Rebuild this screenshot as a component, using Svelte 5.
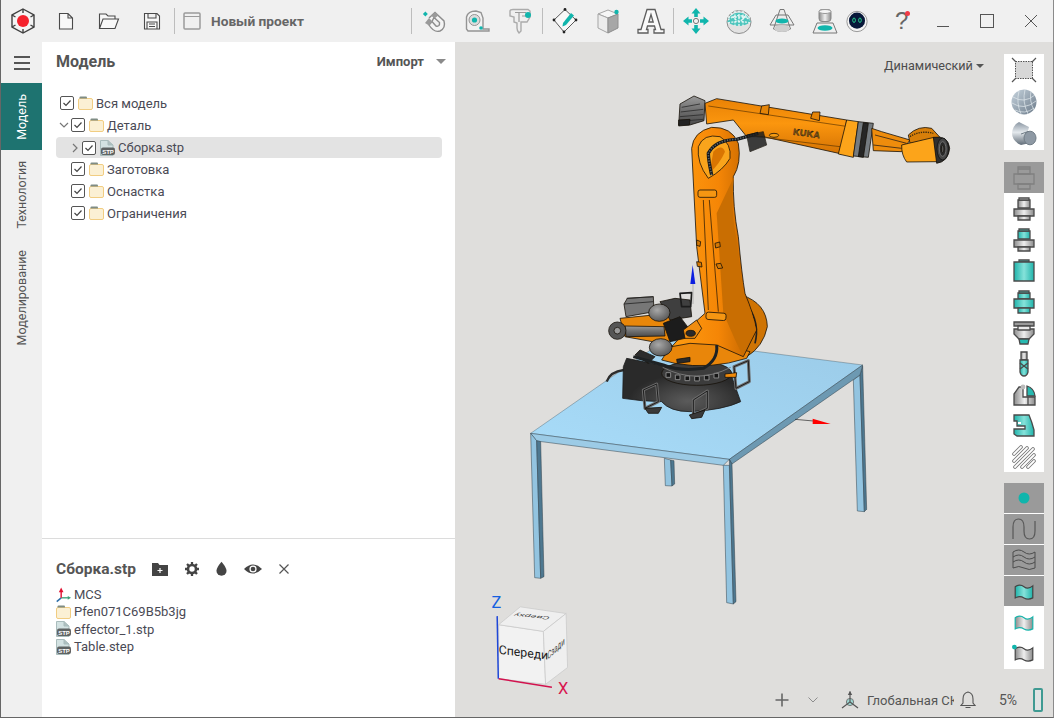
<script>
	const tree = [
		{ label: 'Вся модель', level: 0, icon: 'folder' },
		{ label: 'Деталь', level: 1, icon: 'folder', caret: 'down' },
		{ label: 'Сборка.stp', level: 2, icon: 'stp', caret: 'right', selected: true },
		{ label: 'Заготовка', level: 1, icon: 'folder' },
		{ label: 'Оснастка', level: 1, icon: 'folder' },
		{ label: 'Ограничения', level: 1, icon: 'folder' }
	];
	const items = [
		{ label: 'MCS', icon: 'axes' },
		{ label: 'Pfen071C69B5b3jg', icon: 'folder' },
		{ label: 'effector_1.stp', icon: 'stp' },
		{ label: 'Table.step', icon: 'stp' }
	];
	const hatch = ['M2 9 L9 2', 'M2 16 L15 3', 'M3 22 L21 4', 'M10 22 L22 10', 'M16 22 L22 16'];
	const ringSlots = [228, 256, 285, 314, 343, 372];
</script>

{#snippet folder()}
	<svg class="node-icon" viewBox="0 0 15 14" width="15" height="14">
		<rect x="0.5" y="2.5" width="14" height="11" rx="1.5" fill="#fbf0d4" stroke="#f1cd82" />
		<path d="M1.5 2.5 V1.5 Q1.5 .5 2.5 .5 H8 Q9 .5 9 1.5 V2.5 Z" fill="#7f8c84" />
	</svg>
{/snippet}

{#snippet stp()}
	<svg class="node-icon" viewBox="0 0 15 16" width="15" height="16">
		<path d="M.5 .5 H8 L13 5 V15.5 H.5 Z" fill="#d3e2e2" stroke="#a9bcbc" />
		<path d="M8 .5 V5 H13" fill="#aebfbf" stroke="#a9bcbc" />
		<rect x="1" y="7.5" width="14" height="7.5" rx="2" fill="#5f6363" />
		<text x="8" y="13.6" class="stp-label">STP</text>
	</svg>
{/snippet}

{#snippet axes()}
	<svg class="node-icon" viewBox="0 0 16 16" width="15" height="16">
		<path d="M5.5 11 L.8 15" stroke="#2d6fa8" stroke-width="1.6" />
		<path d="M5.5 11 H13" stroke="#3aa17a" stroke-width="1.4" />
		<path d="M16 11 L12.5 9 V13 Z" fill="#3aa17a" />
		<path d="M5.5 11 V3" stroke="#e01030" stroke-width="1.5" />
		<path d="M5.5 0 L3 5 H8 Z" fill="#e01030" />
	</svg>
{/snippet}

{#snippet flag(fill, stroke)}
	<path d="M4 7 Q10 3 15 7 T26 6 V21 Q20 24 15 21 T4 21 Z" {fill} {stroke} stroke-width="1.5" />
{/snippet}

<div class="app">
	<svg class="defs" width="0" height="0" aria-hidden="true">
		<defs>
			<linearGradient id="steel">
				<stop offset="0" stop-color="#8b8b8b" />
				<stop offset=".5" stop-color="#efefef" />
				<stop offset="1" stop-color="#8b8b8b" />
			</linearGradient>
			<linearGradient id="aqua">
				<stop offset="0" stop-color="#1fb3aa" />
				<stop offset=".5" stop-color="#86e2da" />
				<stop offset="1" stop-color="#1fb3aa" />
			</linearGradient>
			<linearGradient id="ball" x1="0" y1="0" x2="1" y2="1">
				<stop offset="0" stop-color="#c6d3dd" />
				<stop offset="1" stop-color="#6b7a89" />
			</linearGradient>
			<linearGradient id="billet" x1="0" y1="0" x2="0" y2="1">
				<stop offset="0" stop-color="#8a96a2" />
				<stop offset=".45" stop-color="#e4e9ed" />
				<stop offset="1" stop-color="#5f6b77" />
			</linearGradient>
			<linearGradient id="orange" x1="0" y1="0" x2="1" y2="0">
				<stop offset="0" stop-color="#ff9d12" />
				<stop offset=".55" stop-color="#f58606" />
				<stop offset="1" stop-color="#b96000" />
			</linearGradient>
			<linearGradient id="forearm" x1="0" y1="0" x2="0" y2="1">
				<stop offset="0" stop-color="#e98205" />
				<stop offset=".45" stop-color="#fb960e" />
				<stop offset="1" stop-color="#d47203" />
			</linearGradient>
			<linearGradient id="gray3d" x1="0" y1="0" x2="0" y2="1">
				<stop offset="0" stop-color="#9a9a9a" />
				<stop offset=".5" stop-color="#6f6f6f" />
				<stop offset="1" stop-color="#4a4a4a" />
			</linearGradient>
			<radialGradient id="bottle" cx=".4" cy=".35" r=".7">
				<stop offset="0" stop-color="#a8a8a8" />
				<stop offset="1" stop-color="#555" />
			</radialGradient>
			<radialGradient id="plinth" cx=".55" cy=".8" r=".5">
				<stop offset="0" stop-color="#5b5b5b" />
				<stop offset="1" stop-color="#2a2a2a" />
			</radialGradient>
			<linearGradient id="tabletop" x1="0" y1="1" x2="1" y2="0">
				<stop offset="0" stop-color="#a8dcf9" />
				<stop offset="1" stop-color="#9bcbe8" />
			</linearGradient>
		</defs>
	</svg>

	<header class="toolbar">
		<div class="logo">
			<svg viewBox="0 0 24 26" width="24" height="26">
				<path d="M12 1 L23 7 V19 L12 25 L1 19 V7 Z" fill="#f4f4f4" stroke="#3f3f3f" stroke-width="1.4" />
				<path d="M12 1 V5 M23 7 L19.5 9 M23 19 L19.5 17 M12 25 V21 M1 19 L4.5 17 M1 7 L4.5 9" stroke="#3f3f3f" stroke-width="1.4" />
				<circle cx="12" cy="13" r="6" fill="#f5222d" />
			</svg>
		</div>
		<button class="tool" aria-label="Новый">
			<svg viewBox="0 0 20 20" width="20" height="20" class="line">
				<path d="M3.5 2.5 H12 L16.5 7 V18 H3.5 Z M12 2.5 V7 H16.5" />
			</svg>
		</button>
		<button class="tool" aria-label="Открыть">
			<svg viewBox="0 0 22 20" width="22" height="20" class="line">
				<path d="M1.5 17.5 V3 H8 L10 5 H17 V8 M1.5 17.5 L5 8 H20.5 L17 17.5 Z" />
			</svg>
		</button>
		<button class="tool" aria-label="Сохранить">
			<svg viewBox="0 0 20 20" width="20" height="20" class="line">
				<path d="M2.5 2.5 H15 L17.5 5 V18 H2.5 Z M6 2.5 V7 H14 V2.5 M5 18 V11 H15 V18 M7 13 H13 M7 15.5 H13" />
			</svg>
		</button>
		<span class="sep"></span>
		<div class="project">
			<svg viewBox="0 0 18 18" width="18" height="18">
				<rect x="1" y="1" width="16" height="16" rx="1" fill="#f0f0f0" stroke="#9b9b9b" stroke-width="1.5" />
				<path d="M1 4.5 H17" stroke="#9b9b9b" />
			</svg>
			<span>Новый проект</span>
		</div>
		<span class="sep"></span>
		<button class="tool" aria-label="Магнит">
			<svg viewBox="0 0 26 26" width="26" height="26">
				<path d="M8 10 L14 4.5 L23 13 Q25 20 19 23 Q13 25 8 17 L11 13.5 L15 18 Q19 19 18.5 14.5 L13 9.5 L11 13.5" fill="#f4f4f4" stroke="#8c8c8c" stroke-width="1.4" />
				<path d="M4 15 L8 10 L11.5 13.5 L8 17.5 Z" fill="#9a9a9a" />
				<path d="M10 7.5 L14 4 L17.5 7.2 L13.5 10.6 Z" fill="#9a9a9a" />
				<rect x="2.5" y="4" width="3.5" height="3.5" transform="rotate(45 4 6)" fill="#11b5ac" />
			</svg>
		</button>
		<button class="tool" aria-label="Рулетка">
			<svg viewBox="0 0 26 26" width="26" height="26">
				<path d="M2.5 21 V9 Q4 3 12 3 L17 4.5 L19 10 V21 H25 V23 H4 Z" fill="#f2f2f2" stroke="#949494" stroke-width="1.4" />
				<circle cx="10.5" cy="12" r="5.5" fill="#dcdcdc" stroke="#949494" />
				<circle cx="10.5" cy="12" r="2.6" fill="#11b5ac" />
				<circle cx="17" cy="20" r="1.8" fill="#11b5ac" />
			</svg>
		</button>
		<button class="tool" aria-label="Штангенциркуль">
			<svg viewBox="0 0 26 26" width="26" height="26">
				<path d="M3 3 Q3 1.5 6 1.5 H21 L23 3 V9 L20 14 H14 V23 L12 25 Q10 23 10 20 V15 L7 14 V9 L3 8 Z" fill="#efefef" stroke="#ababab" stroke-width="1.4" />
				<path d="M8 4.5 H19 M12 5 V14 M15 8 H19" stroke="#9a9a9a" stroke-width="1.2" />
				<circle cx="21" cy="7" r="3" fill="#11b5ac" />
			</svg>
		</button>
		<span class="sep"></span>
		<button class="tool" aria-label="Эскиз">
			<svg viewBox="0 0 26 26" width="26" height="26">
				<path d="M2 12 L13 1.5 L24 12 L12 24 Z" fill="#f8f8f8" stroke="#5a5a5a" stroke-width="1" />
				<circle cx="2" cy="12" r="1.4" fill="#222" /><circle cx="13" cy="1.5" r="1.4" fill="#222" />
				<circle cx="24" cy="12" r="1.4" fill="#222" /><circle cx="12" cy="24" r="1.4" fill="#222" />
				<path d="M11 15 L19 5 L22 7.5 L14 17 L10.5 18.5 Z" fill="#11b5ac" />
			</svg>
		</button>
		<button class="tool" aria-label="Тело">
			<svg viewBox="0 0 26 26" width="26" height="26">
				<path d="M3 6 L13 2 L23 6 L13 10 Z" fill="#f6f6f6" stroke="#a5a5a5" />
				<path d="M3 6 L13 10 V25 L3 20 Z" fill="#ececec" stroke="#a5a5a5" />
				<path d="M13 10 L23 6 V20 L13 25 Z" fill="#a7a7a7" stroke="#8e8e8e" />
				<circle cx="21.5" cy="4" r="2.2" fill="#11b5ac" />
			</svg>
		</button>
		<button class="tool" aria-label="Текст">
			<svg viewBox="0 0 28 26" width="28" height="26">
				<path d="M10 1.5 H18 L24 21.5 H27 V25 H17 V21.5 H18.5 L17.5 18 H10.5 L9.5 21.5 H11 V25 H1 V21.5 H4 Z M11.8 14 H16.2 L14 6.5 Z" fill="#fafafa" stroke="#5e5e5e" stroke-width="1.3" />
			</svg>
		</button>
		<span class="sep"></span>
		<button class="tool" aria-label="Перемещение">
			<svg viewBox="0 0 26 26" width="26" height="26">
				<circle cx="13" cy="13" r="2.6" fill="#f2f2f2" stroke="#777" />
				<path d="M13 0 L17.5 5.5 H14.8 V9 H11.2 V5.5 H8.5 Z M13 26 L17.5 20.5 H14.8 V17 H11.2 V20.5 H8.5 Z M0 13 L5.5 8.5 V11.2 H9 V14.8 H5.5 V17.5 Z M26 13 L20.5 8.5 V11.2 H17 V14.8 H20.5 V17.5 Z" fill="#11b5ac" />
			</svg>
		</button>
		<button class="tool" aria-label="Сфера">
			<svg viewBox="0 0 26 26" width="26" height="26">
				<ellipse cx="13" cy="14" rx="12" ry="11.5" fill="#e2e2e2" stroke="#8e8e8e" />
				<path d="M1.2 14 A12 11.5 0 0 1 24.8 14 Q13 22 1.2 14 Z" fill="#4cc5bd" />
				<path d="M5 5 Q13 21 21 5 M2 12 Q13 3 24 12 M9 3 V18 M13 2.5 V19 M17 3 V18 M2 9 H24 M2 15 Q13 12 24 15" stroke="#e7f6f5" stroke-width="1.4" stroke-dasharray="2 1.4" fill="none" />
			</svg>
		</button>
		<button class="tool" aria-label="Конус">
			<svg viewBox="0 0 26 26" width="26" height="26">
				<path d="M11 1.5 H15 L21.5 21 Q13 26 4.5 21 Z" fill="#ececec" stroke="#777" />
				<path d="M7 7 H19 L25 17 H1 Z" fill="none" stroke="#777" />
				<ellipse cx="13" cy="13" rx="6.5" ry="2.6" fill="#11b5ac" />
				<ellipse cx="13" cy="20.5" rx="8" ry="3.5" fill="#cfcfcf" />
			</svg>
		</button>
		<button class="tool" aria-label="Плоскость">
			<svg viewBox="0 0 26 26" width="26" height="26">
				<rect x="7" y="1.5" width="12" height="12" rx="3" fill="url(#steel)" stroke="#888" />
				<ellipse cx="13" cy="3.5" rx="6" ry="2" fill="#f5f5f5" stroke="#999" />
				<path d="M5 15 H21 L25 25 H1 Z" fill="#efefef" stroke="#777" />
				<ellipse cx="13" cy="20" rx="7.5" ry="2.8" fill="#11b5ac" />
			</svg>
		</button>
		<button class="tool narrow" aria-label="Ассистент">
			<svg viewBox="0 0 26 26" width="23" height="23">
				<circle cx="13" cy="13" r="12" fill="#f4f4f4" stroke="#8a8a8a" />
				<circle cx="13" cy="12" r="9.5" fill="#08183a" />
				<ellipse cx="9.5" cy="11.5" rx="1.6" ry="2.6" fill="none" stroke="#2ee89b" />
				<ellipse cx="16.5" cy="11.5" rx="1.6" ry="2.6" fill="none" stroke="#2ee89b" />
			</svg>
		</button>
		<button class="tool help" aria-label="Справка">
			<span class="mark">?</span>
			<span class="dot"></span>
		</button>
		<div class="window">
			<button aria-label="Свернуть">
				<svg viewBox="0 0 14 14" width="14" height="14"><path d="M1 12.5 H13" stroke="#555" /></svg>
			</button>
			<button aria-label="Развернуть">
				<svg viewBox="0 0 14 14" width="14" height="14"><rect x=".5" y=".5" width="13" height="13" fill="none" stroke="#555" /></svg>
			</button>
			<button aria-label="Закрыть">
				<svg viewBox="0 0 14 14" width="14" height="14"><path d="M1 1 L13 13 M13 1 L1 13" stroke="#555" /></svg>
			</button>
		</div>
	</header>

	<div class="body">
		<nav class="rail">
			<button class="burger" aria-label="Меню"><span></span><span></span><span></span></button>
			<button class="tab active" style="height:67px"><span>Модель</span></button>
			<button class="tab" style="height:90px"><span>Технология</span></button>
			<button class="tab" style="height:115px"><span>Моделирование</span></button>
		</nav>

		<aside class="panel">
			<div class="panel-head">
				<h2>Модель</h2>
				<div class="import">Импорт <i class="caret"></i></div>
			</div>
			<ul class="tree">
				{#each tree as node}
					<li class="node level-{node.level}" class:selected={node.selected}>
						{#if node.level > 0}
							<span class="twist">
								{#if node.caret === 'down'}
									<svg viewBox="0 0 10 10" width="10" height="10"><path d="M1 3 L5 7 L9 3" /></svg>
								{:else if node.caret === 'right'}
									<svg viewBox="0 0 10 10" width="10" height="10"><path d="M3 1 L7 5 L3 9" /></svg>
								{/if}
							</span>
						{/if}
						<span class="check">
							<svg viewBox="0 0 12 12" width="12" height="12"><path d="M2.5 6 L5 8.5 L9.5 3.5" /></svg>
						</span>
						{#if node.icon === 'stp'}{@render stp()}{:else}{@render folder()}{/if}
						<span class="label">{node.label}</span>
					</li>
				{/each}
			</ul>

			<section class="props">
				<div class="props-head">
					<h3>Сборка.stp</h3>
					<div class="props-actions">
						<svg viewBox="0 0 16 14" width="16" height="14">
							<path d="M0 1 H6 L7.5 3 H16 V14 H0 Z" fill="#444" />
							<path d="M8 6 V11 M5.5 8.5 H10.5" stroke="#fff" stroke-width="1.2" />
						</svg>
						<svg viewBox="0 0 16 16" width="14" height="14" class="gear">
							<circle cx="8" cy="8" r="4.6" fill="none" stroke="#444" stroke-width="3" />
							<path d="M8 0 V16 M0 8 H16 M2.3 2.3 L13.7 13.7 M13.7 2.3 L2.3 13.7" stroke="#444" stroke-width="2.6" stroke-dasharray="3 10 3 0" />
						</svg>
						<svg viewBox="0 0 12 16" width="11" height="15">
							<path d="M6 .5 Q11.5 7 11.5 10.5 A5.5 5.5 0 0 1 .5 10.5 Q.5 7 6 .5 Z" fill="#444" />
						</svg>
						<svg viewBox="0 0 18 12" width="18" height="12">
							<path d="M0 6 Q9 -3 18 6 Q9 15 0 6 Z" fill="#444" />
							<circle cx="9" cy="6" r="3.6" fill="#fff" />
							<circle cx="9" cy="6" r="2.3" fill="#444" />
						</svg>
						<svg viewBox="0 0 10 10" width="10" height="10">
							<path d="M.5 .5 L9.5 9.5 M9.5 .5 L.5 9.5" stroke="#555" stroke-width="1.2" />
						</svg>
					</div>
				</div>
				<ul class="items">
					{#each items as item}
						<li>
							{#if item.icon === 'stp'}{@render stp()}{:else if item.icon === 'axes'}{@render axes()}{:else}{@render folder()}{/if}
							<span>{item.label}</span>
						</li>
					{/each}
				</ul>
			</section>
		</aside>

		<main class="viewport">
			<svg class="scene" viewBox="455 42 598 675">
				<!-- table -->
				<g transform="translate(520 350) scale(.33333)" stroke="#2f3f49" stroke-width="1.5" stroke-linejoin="round">
					<path d="M433 325 L436 407 L456 408 L452 330 Z" fill="#93c4e0" />
					<path d="M452 330 L456 408 L464 402 L462 332 Z" fill="#4e7890" />
					<path d="M1000 90 L1012 483 L1033 485 L1020 75 Z" fill="#93c4e0" />
					<path d="M1020 75 L1033 485 L1040 478 L1028 48 Z" fill="#4e7890" />
					<path d="M436 -31 L1028 45 L628 328 L32 250 Z" fill="url(#tabletop)" stroke-width="1" />
					<path d="M628 328 L1028 45 L1020 75 L636 342 Z" fill="#6d99b2" />
					<path d="M32 250 L628 328 L610 346 L50 273 Z" fill="#9ccbe6" />
					<path d="M32 250 L44 683 L62 685 L50 272 Z" fill="#93c4e0" />
					<path d="M50 272 L62 685 L72 680 L62 275 Z" fill="#4e7890" />
					<path d="M610 346 L620 758 L640 762 L628 346 Z" fill="#93c4e0" />
					<path d="M628 328 L640 762 L648 755 L636 342 Z" fill="#4e7890" />
				</g>

				<!-- robot -->
				<g transform="translate(590 80) scale(.33333)" stroke="#17110a" stroke-width="2.4" stroke-linejoin="round">
					<!-- plinth and rotary base -->
					<path d="M50 905 Q60 875 102 870" fill="none" stroke="#2d2d2d" stroke-width="7" />
					<path d="M100 860 L110 835 L210 855 L420 875 L452 965 Q400 990 300 995 Q240 995 215 965 L155 962 L98 955 Z" fill="url(#plinth)" stroke="#1c1c1c" />
					<ellipse cx="320" cy="880" rx="105" ry="36" fill="#3c3c3c" />
					<path d="M218 862 Q320 915 422 862" fill="none" stroke="#777" stroke-width="3" />
					<g fill="#161616" stroke="#8a8a8a" stroke-width="3">
						{#each ringSlots as x, i}
							<rect {x} y={878 + [0, 7, 10, 11, 8, 2][i]} width="14" height="14" />
						{/each}
					</g>
					<g fill="none" stroke="#6b6b6b" stroke-width="9">
						<path d="M160 930 L200 912 L205 965 L165 985 Z" />
						<path d="M310 960 L352 933 L352 985 L310 1005 Z" />
						<path d="M432 860 L475 842 L478 905 L438 925 Z" />
					</g>
					<g fill="none" stroke="#1e1e1e" stroke-width="3">
						<path d="M160 930 L200 912 L205 965 L165 985 Z" />
						<path d="M310 960 L352 933 L352 985 L310 1005 Z" />
						<path d="M432 860 L475 842 L478 905 L438 925 Z" />
					</g>
					<path d="M165 985 L215 982 L205 1000 L175 1000 Z M298 1005 L345 990 L335 1012 L305 1016 Z" fill="#3a3a3a" />
					<path d="M405 882 L440 878 L438 892 L405 892 Z" fill="#f08a0a" />

					<!-- forearm and wrist -->
					<path d="M270 72 L312 48 L345 62 L342 122 L300 135 L266 135 Z" fill="url(#gray3d)" />
					<path d="M275 82 L330 72 M272 96 L340 88 M270 110 L340 104 M268 124 L340 118" stroke="#2a2a2a" fill="none" />
					<path d="M266 120 L300 118 L298 135 L266 138 Z" fill="#222" />
					<path d="M345 70 L380 56 L770 120 L755 222 L520 170 L470 170 L430 120 L350 132 Z" fill="url(#forearm)" />
					<path d="M355 78 L775 140 M500 170 L750 200" stroke="#5a3302" stroke-width="2" fill="none" />
					<path d="M510 100 L515 78 L538 74 L535 104 Z M662 115 L668 96 L690 96 L688 122 Z" fill="#e48407" />
					<path d="M770 120 L805 125 L790 232 L745 222 Z" fill="#fca41a" />
					<path d="M805 125 L850 130 L835 232 L790 228 Z" fill="#757b80" />
					<path d="M820 128 L835 130 L820 232 L805 230 Z" fill="#262626" />
					<path d="M845 145 L875 155 L960 180 L935 215 L850 212 Z" fill="#ee8c0c" />
					<path d="M855 165 L950 190 M850 195 L935 205" stroke="#2b2118" fill="none" />
					<path d="M955 165 Q985 135 1025 145 L1050 172 L960 190 Z" fill="#d77f0a" />
					<path d="M960 170 Q990 150 1030 160" fill="none" stroke="#3a2a10" stroke-width="4" stroke-dasharray="4 3" />
					<path d="M935 195 L1032 172 L1042 245 L950 246 Q934 225 935 195 Z" fill="#fca41a" />
					<path d="M1030 172 Q1075 165 1079 205 Q1075 245 1040 250 Z" fill="#2f2f2f" />
					<ellipse cx="1058" cy="207" rx="17" ry="33" fill="#454545" stroke="#111" />
					<ellipse cx="1058" cy="207" rx="10" ry="22" fill="#2a2a2a" stroke="#7a7a7a" />
					<ellipse cx="1058" cy="207" rx="4" ry="11" fill="#555" />
					<text class="kuka" transform="translate(608 164) rotate(8)">KUKA</text>
					<ellipse cx="552" cy="166" rx="14" ry="6" fill="#f59a12" />

					<!-- rear swing housing -->
					<path d="M455 645 Q530 670 532 740 Q520 800 470 830 L440 780 Z" fill="#cf7404" />
					<path d="M475 680 Q510 730 495 790" fill="none" stroke="#222" stroke-width="5" />
					<path d="M240 800 Q300 775 400 795 L480 815 L470 835 Q360 870 255 850 L215 840 Z" fill="#e9860a" />

					<!-- main arm -->
					<path d="M305 205 Q310 155 365 142 Q425 140 445 190 Q455 250 430 290 Q428 380 445 470 Q455 580 465 640 Q490 700 500 750 L460 830 L380 795 L300 790 L245 800 L300 740 L345 700 L320 500 Z" fill="url(#orange)" />
					<path d="M432 290 Q420 380 440 480 L460 640 Q490 700 498 750 L458 826 L440 790 L400 700 L380 400 Z" fill="#c96e02" stroke="none" />
					<path d="M355 295 Q320 250 325 200 Q340 160 390 170 Q425 190 420 235 Q400 270 355 295 Z" fill="#f9a41c" />
					<path d="M358 280 Q390 250 405 215 Q395 190 370 215 Z" fill="#d97502" stroke="none" />
					<path d="M365 285 Q355 240 355 220 Q375 180 440 178 L505 160" fill="none" stroke="#14171a" stroke-width="10" />
					<path d="M365 285 Q355 240 355 220 Q375 180 440 178 L505 160" fill="none" stroke="#5c6468" stroke-width="5" stroke-dasharray="4 4" />
					<path d="M470 165 L520 155 L530 195 L480 215 Z" fill="#1f1f1f" opacity=".85" />
					<rect x="324" y="330" width="56" height="22" rx="6" fill="#f59612" />
					<path d="M340 360 L355 690 M358 360 L385 695" fill="none" stroke="#3a2205" stroke-width="2.4" />
					<rect x="348" y="698" width="60" height="22" rx="7" fill="#f59612" transform="rotate(4 378 709)" />
					<path d="M320 480 l12 5 l-2 14 l-10 -3 Z M375 490 l14 -4 l2 14 l-14 4 Z M320 545 l14 2 l2 14 l-14 -2 Z M378 552 l14 -2 l6 14 l-14 2 Z" fill="#d37805" />

					<!-- tool side: motors and bottles -->
					<path d="M90 715 L240 700 L250 780 L215 790 L105 770 Z" fill="#e9870a" />
					<path d="M102 672 L112 655 L190 650 L192 695 L108 710 Z" fill="#777" />
					<path d="M102 672 L190 665 M190 650 L110 655" fill="none" stroke="#222" />
					<path d="M210 665 L255 655 L300 660 L305 710 L240 720 Z" fill="#3f3f3f" />
					<path d="M270 640 L305 638 L302 680 L275 680 Z" fill="none" stroke="#1c1c1c" stroke-width="5" />
					<ellipse cx="208" cy="698" rx="32" ry="26" fill="url(#bottle)" />
					<path d="M220 730 L270 710 L300 750 L285 775 L240 785 Z" fill="#1c1c1c" />
					<path d="M105 738 L222 740 L225 768 L108 770 Z" fill="url(#gray3d)" />
					<circle cx="82" cy="752" r="26" fill="#555" />
					<circle cx="82" cy="752" r="10" fill="#9a9a9a" />
					<ellipse cx="212" cy="802" rx="34" ry="26" fill="url(#bottle)" />
					<path d="M280 750 L320 720 L335 745 L315 775 L285 775 Z" fill="#f08d10" />
					<ellipse cx="302" cy="760" rx="14" ry="9" fill="#2a2a2a" />
					<path d="M150 810 L195 830 L175 850 L135 825 Z" fill="#2c2c2c" />
					<path d="M380 795 Q385 840 340 865 Q270 875 220 855 L130 830" fill="none" stroke="#1e2224" stroke-width="9" />
					<path d="M260 838 L300 832 L300 845 L262 850 Z" fill="#2a2a2a" />

					<!-- axes -->
					<path d="M309 612 V672" stroke="#9a9a9a" stroke-width="2" />
					<path d="M308 555 L301 612 H316 Z" fill="#0c1ee0" stroke="none" />
					<path d="M615 1018 L670 1023" stroke="#222" stroke-width="2" />
					<path d="M668 1016 L722 1032 L668 1032 Z" fill="#f00" stroke="none" />
				</g>

				<!-- view cube -->
				<g transform="translate(470 580) scale(.3724)">
					<path d="M77 120 L197 138 L203 280 L77 265 Z" fill="#f2f2f2" stroke="#c9c9c9" stroke-width="2" />
					<path d="M77 120 L135 72 L258 90 L197 138 Z" fill="#efefef" stroke="#c9c9c9" stroke-width="2" />
					<path d="M197 138 L258 90 L262 235 L203 280 Z" fill="#efefef" stroke="#c9c9c9" stroke-width="2" />
					<text class="cube" transform="matrix(1 .12 0 1 77 198)">Спереди</text>
					<text class="cube small" transform="matrix(.55 -.5 0 1 208 214)">Сзади</text>
					<text class="cube small" transform="matrix(-1 -.1 .3 -.38 216 99)">Сверху</text>
					<path d="M73 97 L76 265" stroke="#1f47d8" stroke-width="4" />
					<path d="M77 265 L220 288" stroke="#d2124e" stroke-width="4" />
					<text x="58" y="74" class="axis z">Z</text>
					<text x="236" y="306" class="axis x">X</text>
				</g>
			</svg>

			<button class="mode">Динамический <i class="caret small"></i></button>

			<div class="palette">
				<div class="group">
					<button class="cell tall" aria-label="Рамка">
						<svg viewBox="0 0 26 26" width="26" height="26">
							<rect x="4.5" y="4.5" width="17" height="17" fill="#d7d7d7" stroke="#555" stroke-dasharray="1.5 1" />
							<path d="M1 1 L5 5 M25 1 L21 5 M1 25 L5 21 M25 25 L21 21" stroke="#555" stroke-width="1.2" />
						</svg>
					</button>
					<button class="cell tall" aria-label="Сетка">
						<svg viewBox="0 0 26 26" width="26" height="26">
							<circle cx="13" cy="13" r="12.5" fill="url(#ball)" />
							<path d="M2 8 Q13 15 24 6 M1 14 Q13 22 25 12 M4 21 Q14 26 23 19 M8 2 Q5 14 10 25 M14 .5 Q11 13 17 25 M20 2 Q18 12 23 21" fill="none" stroke="#e2e9ee" stroke-width=".7" />
						</svg>
					</button>
					<button class="cell tall" aria-label="Деталь">
						<svg viewBox="0 0 26 26" width="26" height="26">
							<path d="M1 12 Q2 4 8 1 L18 6 Q15 15 19 22 L10 24 Q1 20 1 12 Z" fill="url(#billet)" />
							<ellipse cx="19" cy="17" rx="6" ry="6.8" fill="#8e99a4" stroke="#6f7b85" />
							<path d="M10 13 L17 10.5" stroke="#6f7b85" />
						</svg>
					</button>
				</div>

				<div class="group">
					<button class="cell dim" aria-label="Заготовка">
						<svg viewBox="0 0 22 24" width="22" height="24" class="ghost">
							<path d="M5 1 H17 V8 H5 Z M5 3 H17" /><path d="M1 8 H21 V18 H1 Z" /><path d="M5 18 H17 V23 H5 Z" />
						</svg>
					</button>
					<button class="cell" aria-label="Патрон">
						<svg viewBox="0 0 22 24" width="22" height="24" class="part">
							<path d="M5 3 H17 V11 H5 Z" fill="url(#steel)" /><path d="M6 1 H16 V3 H6 Z" fill="#eee" />
							<path d="M1 12 H21 V19 H1 Z" fill="url(#steel)" /><path d="M5 19 H17 V23 H5 Z" fill="url(#steel)" />
						</svg>
					</button>
					<button class="cell" aria-label="Патрон">
						<svg viewBox="0 0 22 24" width="22" height="24" class="part">
							<path d="M5 3 H17 V11 H5 Z" fill="url(#aqua)" /><path d="M6 1 H16 V3 H6 Z" fill="#54cfc7" />
							<path d="M1 12 H21 V19 H1 Z" fill="url(#steel)" /><path d="M5 19 H17 V23 H5 Z" fill="url(#steel)" />
						</svg>
					</button>
					<button class="cell" aria-label="Цилиндр">
						<svg viewBox="0 0 22 24" width="22" height="24" class="part">
							<path d="M6 1 H16 V3 H6 Z" fill="#54cfc7" /><path d="M1 3 H21 V22 H1 Z" fill="url(#aqua)" />
						</svg>
					</button>
					<button class="cell" aria-label="Втулка">
						<svg viewBox="0 0 22 24" width="22" height="24" class="part">
							<path d="M5 3 H17 V9 H5 Z" fill="url(#aqua)" /><path d="M6 1 H16 V3 H6 Z" fill="#54cfc7" />
							<path d="M1 9 H21 V18 H1 Z" fill="url(#aqua)" /><path d="M5 18 H17 V23 H5 Z" fill="url(#aqua)" />
						</svg>
					</button>
					<button class="cell" aria-label="Держатель">
						<svg viewBox="0 0 22 24" width="22" height="24" class="part">
							<path d="M1 1 H21 V5 H1 Z" fill="#9a9a9a" /><path d="M1 8 H21 V13 L16 18 H6 L1 13 Z" fill="url(#steel)" />
							<path d="M5 5 H17 V9 H5 Z" fill="#e8e8e8" /><path d="M6 18 H16 L15 23 H7 Z" fill="#27b9b0" />
						</svg>
					</button>
					<button class="cell" aria-label="Фреза">
						<svg viewBox="0 0 12 26" width="12" height="26" class="part">
							<path d="M3 1 H9 V9 H3 Z" fill="url(#steel)" />
							<path d="M2 9 H10 V21 Q9 25 6 25 Q3 25 2 21 Z" fill="url(#aqua)" />
							<path d="M2 12 L10 18 M2 18 L10 12" stroke-width="1" fill="none" />
						</svg>
					</button>
					<button class="cell" aria-label="Станок">
						<svg viewBox="0 0 24 22" width="24" height="22" class="part">
							<path d="M2 21 V10 L7 3 H11 V13 H16 V21 Z M16 21 H23 V13 H16" fill="url(#steel)" />
							<path d="M15 2 Q22 4 23 12 H15 Z" fill="#27b9b0" />
							<circle cx="11" cy="3" r="2.4" fill="#bbb" />
						</svg>
					</button>
					<button class="cell" aria-label="Зажим">
						<svg viewBox="0 0 22 24" width="22" height="24" class="part">
							<path d="M1 1 H16 Q19 8 21 16 V22 H4 L1 20 V15 H12 V12 H4 V7 H1 Z" fill="url(#aqua)" />
							<rect x="5" y="8" width="3" height="2" fill="#fff" stroke-width=".8" />
						</svg>
					</button>
					<button class="cell" aria-label="Штриховка">
						<svg viewBox="0 0 24 24" width="24" height="24">
							{#each hatch as d}
								<path {d} stroke="#777" stroke-width="3.6" stroke-linecap="round" />
								<path {d} stroke="#fff" stroke-width="1.8" stroke-linecap="round" />
							{/each}
						</svg>
					</button>
				</div>

				<div class="group flat">
					<button class="cell dim slim" aria-label="Точка">
						<svg viewBox="0 0 12 12" width="12" height="12"><circle cx="6" cy="6" r="5.5" fill="#10b5ac" /></svg>
					</button>
					<button class="cell dim slim" aria-label="Кривая">
						<svg viewBox="0 0 24 22" width="24" height="22"><path d="M1 21 V9 Q1 1 6.5 1 Q12 1 12 9 V13 Q12 21 17.5 21 Q23 21 23 13 V3" fill="none" stroke="#585858" stroke-width="1.2" /></svg>
					</button>
					<button class="cell dim slim" aria-label="Поверхность">
						<svg viewBox="0 0 24 22" width="24" height="22" class="waves">
							<path d="M1 3 Q7 -1 12 3 T23 3 V19 Q17 22 12 19 T1 19 Z M1 8 Q7 4 12 8 T23 8 M1 13 Q7 9 12 13 T23 13" />
						</svg>
					</button>
					<button class="cell dim slim" aria-label="Грань">
						<svg viewBox="0 0 30 26" width="24" height="21">{@render flag('url(#aqua)', '#444')}</svg>
					</button>
					<button class="cell" aria-label="Контур">
						<svg viewBox="0 0 30 26" width="24" height="21">{@render flag('url(#steel)', '#17b4ab')}</svg>
					</button>
					<button class="cell" aria-label="Вершина">
						<svg viewBox="0 0 30 26" width="24" height="21">
							{@render flag('url(#steel)', '#444')}
							<circle cx="3" cy="5" r="3" fill="#11b5ac" />
						</svg>
					</button>
				</div>
			</div>

			<footer class="status">
				<svg viewBox="0 0 14 14" width="14" height="14"><path d="M7 .5 V13.5 M.5 7 H13.5" stroke="#666" stroke-width="1.6" /></svg>
				<svg class="chev" viewBox="0 0 10 6" width="10" height="6"><path d="M.5 .5 L5 5 L9.5 .5" fill="none" stroke="#8d8d8d" /></svg>
				<svg class="cs-icon" viewBox="0 0 18 18" width="18" height="18">
					<circle cx="9" cy="11" r="3.6" fill="#9dd7d2" stroke="#777" />
					<path d="M9 .5 V11 L1 17 M9 11 L17 17" fill="none" stroke="#555" stroke-width="1.2" />
					<path d="M9 0 L6.8 4 H11.2 Z" fill="#555" />
				</svg>
				<span class="cs">Глобальная СК</span>
				<svg class="bell" viewBox="0 0 16 18" width="16" height="18">
					<path d="M8 1 Q13 2 13 8 V12 L15 14.5 H1 L3 12 V8 Q3 2 8 1 Z M5.5 16.5 H10.5" fill="none" stroke="#555" stroke-width="1.1" />
				</svg>
				<span class="load">5%</span>
				<span class="meter"></span>
			</footer>
		</main>
	</div>
</div>

<style>
	:global(body) {
		margin: 0;
		background: #dfdedc;
	}

	* {
		box-sizing: border-box;
	}

	button {
		border: 0;
		padding: 0;
		background: none;
		font: inherit;
		color: inherit;
	}

	ul {
		list-style: none;
		margin: 0;
		padding: 0;
	}

	svg {
		display: block;
	}

	.app {
		width: 1054px;
		height: 718px;
		display: flex;
		flex-direction: column;
		overflow: hidden;
		border-left: 1px solid #666;
		border-right: 1px solid #8b8b8b;
		border-bottom: 1px solid #666;
		font-family: Roboto, 'Liberation Sans', sans-serif;
		font-size: 13px;
		color: #484848;
	}

	.defs {
		position: absolute;
	}

	.toolbar {
		height: 42px;
		flex: none;
		display: flex;
		align-items: center;
		background: #f0f0f0;
	}

	.logo {
		width: 43px;
		flex: none;
		display: flex;
		justify-content: center;
	}

	.tool {
		width: 43px;
		height: 42px;
		flex: none;
		display: flex;
		align-items: center;
		justify-content: center;
	}

	.tool.narrow {
		width: 22px;
	}

	.line path {
		fill: #f8f8f8;
		stroke: #4a4a4a;
		stroke-width: 1.1;
	}

	.sep {
		width: 1px;
		height: 26px;
		flex: none;
		margin-left: 1px;
		background: #bdbdbd;
	}

	.project {
		width: 235px;
		flex: none;
		display: flex;
		align-items: center;
		gap: 10px;
		padding-left: 8px;
		font-size: 13.7px;
		font-weight: 700;
		color: #666;
	}

	.help {
		position: relative;
		width: 53px;
		justify-content: flex-start;
		padding-left: 27px;
	}

	.mark {
		font-size: 24px;
		color: #666;
		font-family: 'Liberation Sans', sans-serif;
	}

	.dot {
		position: absolute;
		left: 37px;
		top: 11px;
		width: 5px;
		height: 5px;
		border-radius: 50%;
		background: #f23a45;
	}

	.window {
		margin-left: auto;
		display: flex;
	}

	.window button {
		width: 44px;
		height: 42px;
		display: flex;
		align-items: center;
		justify-content: center;
	}

	.body {
		flex: 1;
		min-height: 0;
		display: flex;
	}

	.rail {
		width: 41px;
		flex: none;
		display: flex;
		flex-direction: column;
		background: #f0f0f0;
	}

	.burger {
		height: 41px;
		flex: none;
		display: flex;
		flex-direction: column;
		align-items: center;
		justify-content: center;
		gap: 4px;
	}

	.burger span {
		width: 16px;
		height: 2px;
		background: #555;
	}

	.tab {
		flex: none;
		display: flex;
		align-items: center;
		justify-content: center;
		font-size: 12.5px;
		color: #555;
	}

	.tab span {
		writing-mode: vertical-rl;
		transform: rotate(180deg);
	}

	.tab.active {
		background: #1e7370;
		color: #fff;
	}

	.panel {
		width: 413px;
		flex: none;
		display: flex;
		flex-direction: column;
		background: #fff;
	}

	.panel-head {
		height: 38px;
		flex: none;
		display: flex;
		align-items: center;
		justify-content: space-between;
		padding: 0 9px 0 14px;
	}

	h2,
	h3 {
		margin: 0;
		font-size: 16px;
		font-weight: 700;
		color: #555;
	}

	h3 {
		font-size: 15.5px;
	}

	.import {
		display: flex;
		align-items: center;
		gap: 12px;
		font-weight: 700;
		font-size: 13px;
		color: #555;
	}

	.caret {
		width: 0;
		height: 0;
		border-left: 5px solid transparent;
		border-right: 5px solid transparent;
		border-top: 5px solid #8a8a8a;
	}

	.caret.small {
		display: inline-block;
		border-left-width: 4px;
		border-right-width: 4px;
		border-top: 4px solid #555;
		vertical-align: 2px;
	}

	.tree {
		margin: 12px 13px 0 14px;
	}

	.node {
		height: 22px;
		display: flex;
		align-items: center;
		border-radius: 4px;
	}

	.level-0 {
		padding-left: 4px;
	}

	.level-2 {
		padding-left: 11px;
	}

	.node.selected {
		background: #e3e3e3;
		height: 21px;
		margin-top: 1px;
	}

	.twist {
		width: 15px;
		flex: none;
		display: flex;
		justify-content: center;
	}

	.twist path {
		fill: none;
		stroke: #777;
		stroke-width: 1.2;
	}

	.check {
		width: 14px;
		height: 14px;
		flex: none;
		display: flex;
		align-items: center;
		justify-content: center;
		margin-right: 4px;
		background: #fff;
		border: 1px solid #555;
		border-radius: 2px;
	}

	.check path {
		fill: none;
		stroke: #444;
		stroke-width: 1.2;
	}

	.node-icon {
		flex: none;
	}

	.label {
		margin-left: 3px;
		color: #4a4a55;
	}

	.stp-label {
		font-family: 'Liberation Sans', sans-serif;
		font-size: 6px;
		font-weight: 700;
		fill: #fff;
		text-anchor: middle;
	}

	.props {
		margin-top: auto;
		height: 179px;
		flex: none;
		padding: 0 14px;
		border-top: 1px solid #dcdcdc;
	}

	.props-head {
		height: 45px;
		padding-top: 14px;
		display: flex;
		align-items: center;
	}

	.props-actions {
		display: flex;
		align-items: center;
		gap: 17px;
		margin-left: 16px;
	}

	.items {
		margin-top: 2px;
	}

	.items li {
		height: 17.3px;
		display: flex;
		align-items: center;
		gap: 3px;
		font-size: 13px;
		color: #4a4a55;
	}

	.viewport {
		position: relative;
		flex: 1;
		background: #dfdedc;
	}

	.scene {
		position: absolute;
		inset: 0;
		width: 100%;
		height: 100%;
	}

	.kuka {
		font-family: 'Liberation Sans', sans-serif;
		font-weight: 700;
		font-size: 27px;
		letter-spacing: 1px;
		fill: #8a5a10;
		stroke: #1a1a1a;
		stroke-width: 1.2;
	}

	.cube {
		font-family: Roboto, sans-serif;
		font-size: 33px;
		fill: #222;
	}

	.cube.small {
		font-size: 29px;
		fill: #444;
	}

	.axis {
		font-family: Roboto, sans-serif;
		font-size: 44px;
	}

	.axis.z {
		fill: #1560e0;
	}

	.axis.x {
		fill: #d8174f;
	}

	.mode {
		position: absolute;
		top: 16px;
		right: 69px;
		font-size: 12.6px;
		color: #4c4c4c;
	}

	.palette {
		position: absolute;
		top: 12px;
		right: 9px;
		width: 40px;
		display: flex;
		flex-direction: column;
		gap: 12px;
	}

	.group {
		display: flex;
		flex-direction: column;
		background: #fff;
	}

	.group.flat {
		margin-top: -1px;
	}

	.cell {
		width: 40px;
		height: 31px;
		flex: none;
		display: flex;
		align-items: center;
		justify-content: center;
	}

	.cell.tall {
		height: 32px;
	}

	.cell.dim {
		background: #9a9a9a;
	}

	.cell.slim {
		height: 30px;
		margin-bottom: 1px;
	}

	.ghost path {
		fill: none;
		stroke: #808080;
		stroke-width: 1.3;
	}

	.part :global(path) {
		stroke: #4a4a4a;
		stroke-width: 1.3;
	}

	.waves path {
		fill: none;
		stroke: #4d4d4d;
		stroke-width: 1;
	}

	.status {
		position: absolute;
		right: 10px;
		bottom: 4px;
		height: 26px;
		display: flex;
		align-items: center;
		color: #555;
	}

	.chev {
		margin-left: 19px;
	}

	.cs-icon {
		margin-left: 23px;
	}

	.cs {
		width: 87px;
		margin-left: 8px;
		overflow: hidden;
		white-space: nowrap;
	}

	.bell {
		margin-left: 6px;
	}

	.load {
		margin-left: 23px;
		font-size: 14px;
	}

	.meter {
		width: 10px;
		height: 24px;
		margin-left: 16px;
		background: #dfe3e3;
		border: 2px solid #3f9a92;
		border-radius: 2px;
	}
</style>
